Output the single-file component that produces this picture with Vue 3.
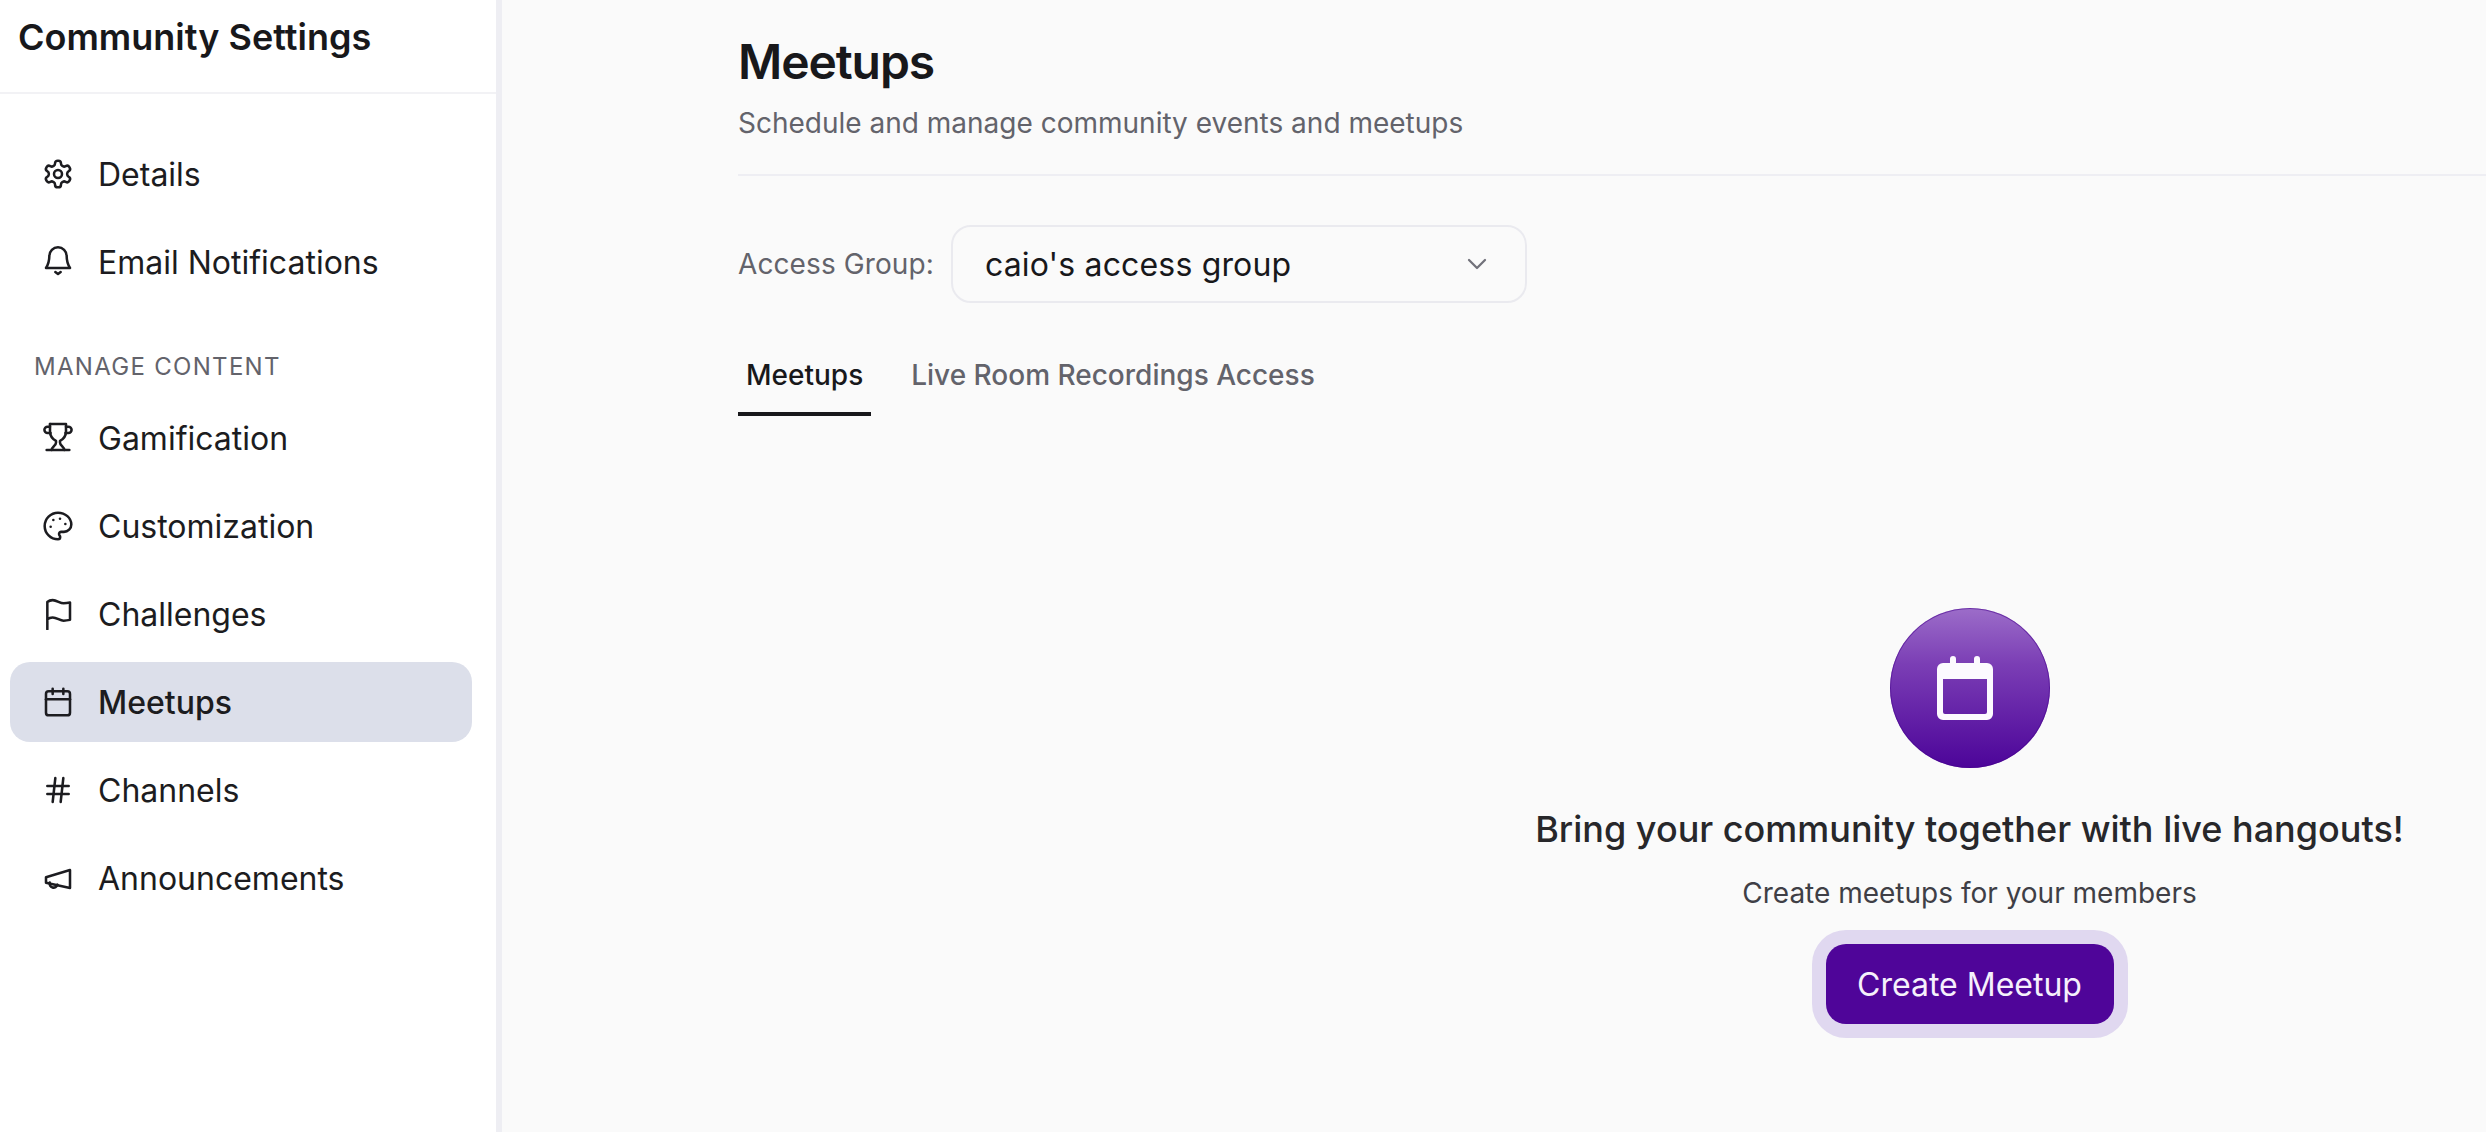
<script setup>
const topItems = [
  {
    label: 'Details',
    paths: [
      'M12.22 2h-.44a2 2 0 0 0-2 2v.18a2 2 0 0 1-1 1.73l-.43.25a2 2 0 0 1-2 0l-.15-.08a2 2 0 0 0-2.73.73l-.22.38a2 2 0 0 0 .73 2.73l.15.1a2 2 0 0 1 1 1.72v.51a2 2 0 0 1-1 1.74l-.15.09a2 2 0 0 0-.73 2.73l.22.38a2 2 0 0 0 2.73.73l.15-.08a2 2 0 0 1 2 0l.43.25a2 2 0 0 1 1 1.73V20a2 2 0 0 0 2 2h.44a2 2 0 0 0 2-2v-.18a2 2 0 0 1 1-1.73l.43-.25a2 2 0 0 1 2 0l.15.08a2 2 0 0 0 2.73-.73l.22-.39a2 2 0 0 0-.73-2.73l-.15-.08a2 2 0 0 1-1-1.74v-.5a2 2 0 0 1 1-1.74l.15-.09a2 2 0 0 0 .73-2.73l-.22-.38a2 2 0 0 0-2.73-.73l-.15.08a2 2 0 0 1-2 0l-.43-.25a2 2 0 0 1-1-1.73V4a2 2 0 0 0-2-2z',
      'M15 12a3 3 0 1 1-6 0 3 3 0 0 1 6 0z'
    ]
  },
  {
    label: 'Email Notifications',
    paths: ['M5.5 7.5a6.5 6.5 0 0 1 13 0c0 5 2.5 9 2.5 9H3s2.5-4 2.5-9', 'M10 19.5 12 21l2-1.5']
  }
]

const contentItems = [
  {
    label: 'Gamification',
    paths: [
      'M6 1.5h12V7c0 3.5-2.2 6-4.5 7.2v1.3c0 2 3 3.2 3.3 5.5',
      'M6 1.5V7c0 3.5 2.2 6 4.5 7.2v1.3c0 2-3 3.2-3.3 5.5',
      'M3.5 21h17',
      'M6 3.5H4.2a2.4 2.4 0 0 0 0 4.8h2.2',
      'M18 3.5h1.8a2.4 2.4 0 0 1 0 4.8h-2.2'
    ]
  },
  {
    label: 'Customization',
    paths: [
      'M13.5 6.5h.01',
      'M17.5 10.5h.01',
      'M8.5 7.5h.01',
      'M6.5 12.5h.01',
      'M12 2C6.5 2 2 6.5 2 12s4.5 10 10 10c.926 0 1.648-.746 1.648-1.688 0-.437-.18-.835-.437-1.125-.29-.289-.438-.652-.438-1.125a1.64 1.64 0 0 1 1.668-1.668h1.996c3.051 0 5.555-2.503 5.555-5.554C21.965 6.012 17.461 2 12 2z'
    ]
  },
  {
    label: 'Challenges',
    paths: ['M4 23.5V3s1.6-1.4 4-1.4c3.2 0 5.4 2.4 8.2 2.4 2.2 0 4.8-.6 4.8-.6v13s-2.6.6-4.8.6c-2.8 0-5-2.4-8.2-2.4-2.4 0-4 1.4-4 1.4']
  },
  {
    label: 'Meetups',
    active: true,
    paths: ['M5 4h14a2 2 0 0 1 2 2v14a2 2 0 0 1-2 2H5a2 2 0 0 1-2-2V6a2 2 0 0 1 2-2z', 'M16 2v4', 'M8 2v4', 'M3 10h18']
  },
  {
    label: 'Channels',
    paths: ['M4 9h16', 'M4 15h16', 'M10 3 8 21', 'M16 3l-2 18']
  },
  {
    label: 'Announcements',
    paths: ['M3 11.5 21 6v13.5L3 15.5z', 'M11.6 17a3 3 0 1 1-5.8-1.6']
  }
]
</script>

<template>
  <div class="page">
    <aside class="sidebar">
      <div class="sidebar-head">Community Settings</div>
      <nav class="nav">
        <a v-for="item in topItems" :key="item.label" class="nav-item">
          <svg class="nav-icon" viewBox="0 0 24 24"><path v-for="d in item.paths" :key="d" :d="d" /></svg>
          <span>{{ item.label }}</span>
        </a>
        <div class="nav-label">MANAGE CONTENT</div>
        <a
          v-for="item in contentItems"
          :key="item.label"
          class="nav-item"
          :class="{ active: item.active }"
        >
          <svg class="nav-icon" viewBox="0 0 24 24"><path v-for="d in item.paths" :key="d" :d="d" /></svg>
          <span>{{ item.label }}</span>
        </a>
      </nav>
    </aside>

    <main class="main">
      <div class="content">
        <header class="head">
          <h1>Meetups</h1>
          <p>Schedule and manage community events and meetups</p>
        </header>

        <div class="group-row">
          <label>Access Group:</label>
          <div class="select">
            <span>caio's access group</span>
            <svg class="chevron" viewBox="0 0 24 24"><path d="m6 9 6 6 6-6" /></svg>
          </div>
        </div>

        <div class="tabs">
          <div class="tab current">Meetups</div>
          <div class="tab">Live Room Recordings Access</div>
        </div>

        <section class="empty">
          <div class="circle">
            <svg class="hero-icon" viewBox="0 0 56 64">
              <path
                fill-rule="evenodd"
                d="M13 3a3 3 0 0 1 6 0v4h18V3a3 3 0 0 1 6 0v4h7a6 6 0 0 1 6 6v45a6 6 0 0 1-6 6H6a6 6 0 0 1-6-6V13a6 6 0 0 1 6-6h7zM6 23v33a2 2 0 0 0 2 2h40a2 2 0 0 0 2-2V23z"
              />
            </svg>
          </div>
          <h2>Bring your community together with live hangouts!</h2>
          <p>Create meetups for your members</p>
          <button class="create" type="button">Create Meetup</button>
        </section>
      </div>
    </main>
  </div>
</template>

<style>
html,
body {
  margin: 0;
  overflow: hidden;
}
</style>

<style scoped>
.page {
  display: flex;
  height: 100vh;
  font-family: Inter, "Noto Sans", sans-serif;
  color: #18181b;
  background: #fafafa;
}

.sidebar {
  flex: 0 0 496px;
  background: #fff;
  border-right: 6px solid #eeeef3;
}

.sidebar-head {
  height: 92px;
  padding-left: 18px;
  border-bottom: 2px solid #f2f2f5;
  font-size: 36px;
  font-weight: 600;
  line-height: 75px;
  color: #18181b;
}

.nav {
  display: flex;
  flex-direction: column;
  gap: 8px;
  padding: 40px 24px 0 10px;
}

.nav-item {
  display: flex;
  align-items: center;
  gap: 24px;
  height: 80px;
  padding-left: 32px;
  border-radius: 20px;
  font-size: 32px;
  color: #1c1c20;
}

.nav-item.active {
  background: #dcdfea;
  font-weight: 500;
}

.nav-icon {
  flex: none;
  width: 32px;
  height: 32px;
  fill: none;
  stroke: currentColor;
  stroke-width: 1.9;
  stroke-linecap: round;
  stroke-linejoin: round;
}

.nav-label {
  padding: 42px 0 8px 24px;
  font-size: 24px;
  line-height: 30px;
  letter-spacing: 1.3px;
  color: #63636b;
}

.main {
  flex: 1;
  min-width: 0;
  overflow: hidden;
  padding-left: 236px;
}

.content {
  width: 2463px;
}

.head {
  height: 174px;
  border-bottom: 2px solid #eeeef3;
}

.head h1 {
  margin: 0;
  padding-top: 31px;
  font-size: 48px;
  font-weight: 600;
  line-height: 62px;
  letter-spacing: -1.1px;
  color: #18181b;
}

.head p {
  margin: 0;
  padding-top: 12px;
  font-size: 28px;
  line-height: 36px;
  color: #63636b;
}

.group-row {
  display: flex;
  align-items: center;
  gap: 17px;
  margin-top: 49px;
  font-size: 28px;
  letter-spacing: 0.1px;
  color: #63636b;
}

.select {
  display: flex;
  align-items: center;
  justify-content: space-between;
  box-sizing: border-box;
  width: 576px;
  height: 78px;
  padding: 0 32px;
  border: 2px solid #eaeaef;
  border-radius: 20px;
  font-size: 32px;
  letter-spacing: 0.16px;
  color: #18181b;
}

.chevron {
  width: 32px;
  height: 32px;
  fill: none;
  stroke: #71717a;
  stroke-width: 1.7;
  stroke-linecap: round;
  stroke-linejoin: round;
}

.tabs {
  display: flex;
  gap: 32px;
  margin-top: 33px;
}

.tab {
  height: 71px;
  padding: 5px 8px 0;
  line-height: 68px;
  font-size: 28px;
  font-weight: 500;
  color: #63636b;
}

.tab.current {
  color: #18181b;
  border-bottom: 4px solid #18181b;
}

.empty {
  display: flex;
  flex-direction: column;
  align-items: center;
  margin-top: 192px;
}

.circle {
  display: flex;
  align-items: center;
  justify-content: center;
  box-sizing: border-box;
  width: 160px;
  height: 160px;
  padding-right: 9px;
  border-radius: 50%;
  background: linear-gradient(180deg, #9c6dc9 0%, #7b3eb5 35%, #4c0499 100%);
  box-shadow: inset 0 0 0 1px rgba(70, 0, 140, 0.55);
}

.hero-icon {
  width: 56px;
  height: 64px;
  fill: #fcfaff;
}

.empty h2 {
  margin: 39px 0 0;
  font-size: 36px;
  font-weight: 500;
  line-height: 44px;
  color: #27272a;
}

.empty p {
  margin: 24px 0 0;
  font-size: 28px;
  line-height: 36px;
  color: #3f3f46;
}

.create {
  box-sizing: border-box;
  width: 288px;
  height: 80px;
  margin-top: 33px;
  border: none;
  border-radius: 20px;
  background: #4f0599;
  box-shadow: 0 0 0 14px #e0d8f0;
  font-family: inherit;
  font-size: 32px;
  color: #f6f0fc;
}
</style>
